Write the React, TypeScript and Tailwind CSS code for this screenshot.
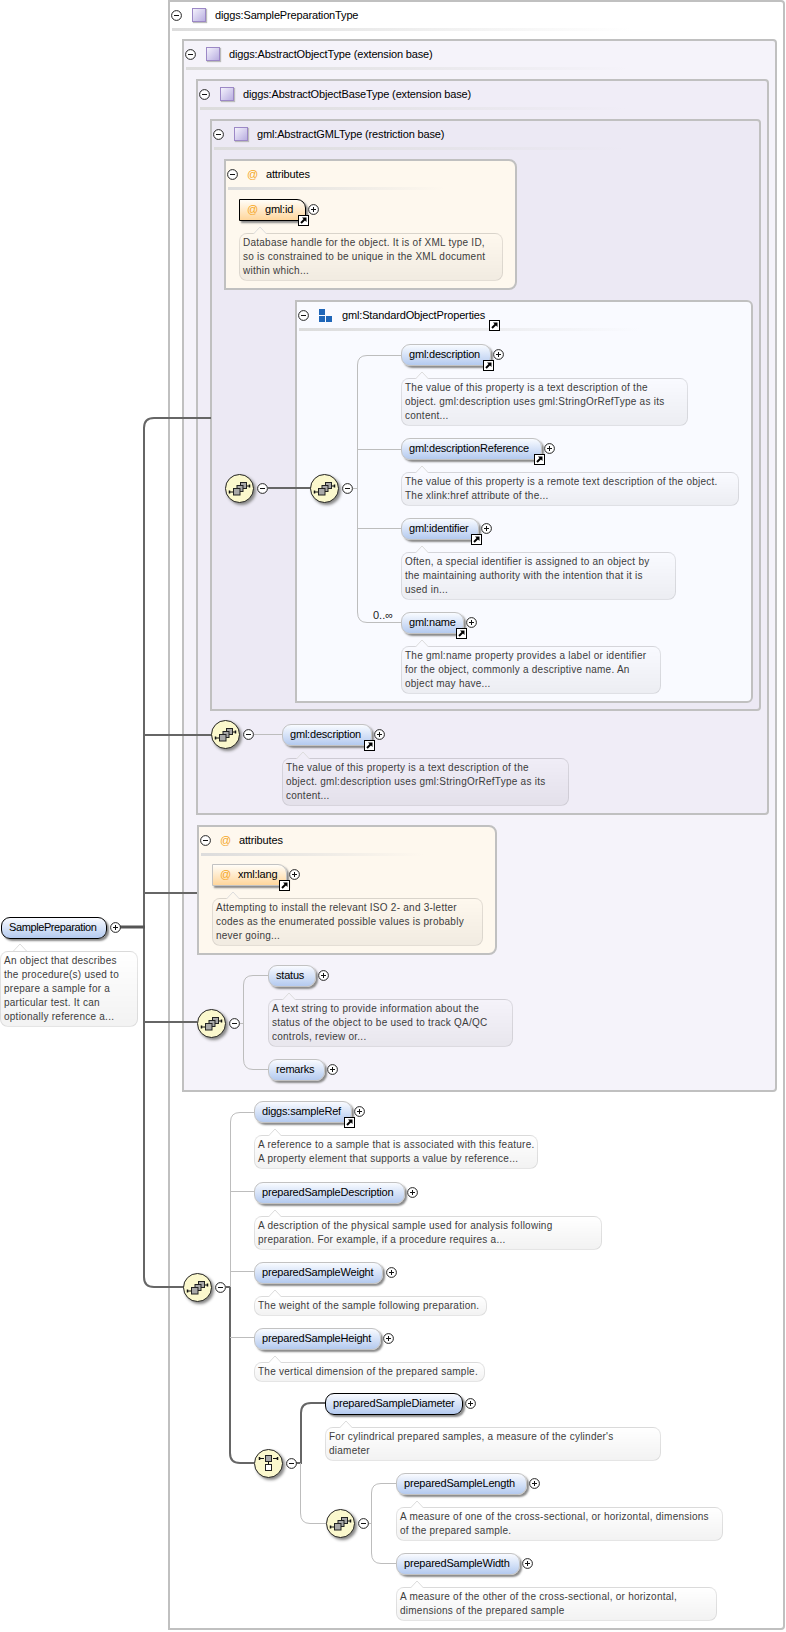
import type { ReactNode } from 'react';

function Minus() {
  return (
    <svg width="11" height="11" viewBox="0 0 11 11" className="shrink-0">
      <circle cx="5.5" cy="5.5" r="4.9" fill="#fff" stroke="#222" />
      <path d="M3 5.5h5" stroke="#111" />
    </svg>
  );
}

function Plus() {
  return (
    <svg width="11" height="11" viewBox="0 0 11 11" className="shrink-0">
      <circle cx="5.5" cy="5.5" r="4.9" fill="#fff" stroke="#222" />
      <path d="M3 5.5h5M5.5 3v5" stroke="#111" />
    </svg>
  );
}

function RefArrow({ className }: { className: string }) {
  return (
    <svg width="11" height="11" viewBox="0 0 11 11" className={className}>
      <rect x="0.5" y="0.5" width="10" height="10" fill="#fff" stroke="#000" />
      <path d="M3 8l4-4" stroke="#000" strokeWidth="2" />
      <path d="M4 2.5h4.5V7z" fill="#000" />
    </svg>
  );
}

function TypeIcon() {
  return (
    <div className="h-[14px] w-[14px] shrink-0 border-[1.5px] border-[#9c88c6] bg-linear-to-br from-[#f4f2fc] to-[#b9aee0] shadow-[1px_1px_1px_#bbb]"></div>
  );
}

function GroupIcon() {
  return (
    <svg width="13" height="13" viewBox="0 0 13 13" className="shrink-0">
      <path d="M0 0h6v6H0zM0 7h6v6H0zM7 7h6v6H7z" fill="#1f66b8" />
    </svg>
  );
}

function Symbol({ className, choice }: { className: string; choice?: boolean }) {
  return (
    <div className={`absolute flex items-center ${className}`}>
      <div className="h-[29px] w-[29px] shrink-0 rounded-full border border-[#222] bg-[#fbf8cd] shadow-[2px_2px_3px_#888]">
        {choice ? (
          <svg width="27" height="27" viewBox="0 0 27 27">
            <path d="M5 8.5h4M18 8.5h4M13.5 12v2" stroke="#111" />
            <path d="M4.5 7v3M22.5 7v3" stroke="#111" strokeWidth="1.5" />
            <rect x="10.5" y="5.5" width="6" height="6" fill="#a8a8a8" stroke="#222" />
            <rect x="10.5" y="14.5" width="6" height="6" fill="#fff" stroke="#222" />
          </svg>
        ) : (
          <svg width="27" height="27" viewBox="0 0 27 27">
            <path d="M3.5 17h4M20 11h3.5" stroke="#111" />
            <path d="M3.5 15.5v3M23.5 9.5v3" stroke="#111" strokeWidth="1.5" />
            <rect x="14.5" y="7.5" width="6" height="6" fill="#a8a8a8" stroke="#222" />
            <rect x="11" y="10.5" width="6" height="6" fill="#a8a8a8" stroke="#222" />
            <rect x="7.5" y="13.5" width="6.5" height="6.5" fill="#a8a8a8" stroke="#222" />
          </svg>
        )}
      </div>
      <div className="ml-[3px]">
        <Minus />
      </div>
    </div>
  );
}

function Desc({
  lines,
  w,
  tri = 'fill-white',
}: {
  lines: string[];
  w: string;
  tri?: string;
}) {
  return (
    <div
      className={`relative mt-[12px] rounded-[8px] border border-black/10 bg-linear-to-b from-transparent to-black/5 py-[2px] pl-[3px] text-[10px] leading-[14px] tracking-[0.25px] whitespace-nowrap text-[#3c3c3c] ${w}`}
    >
      <svg
        width="16"
        height="8"
        viewBox="0 0 16 8"
        className={`absolute top-[-8px] left-[12px] ${tri}`}
      >
        <path d="M1 8.5L8 1l7 7.5" stroke="#dcdcdc" />
      </svg>
      {lines.map((line) => (
        <div key={line}>{line}</div>
      ))}
    </div>
  );
}

interface LeafProps {
  name: string;
  pos: string;
  pillW: string;
  descW?: string;
  lines?: string[];
  tri?: string;
  hasRef?: boolean;
  selected?: boolean;
  plusGap?: string;
  track?: string;
}

function Leaf({
  name,
  pos,
  pillW,
  descW,
  lines,
  tri,
  hasRef,
  selected,
  plusGap = 'ml-[2px]',
  track = 'tracking-[-0.2px]',
}: LeafProps) {
  return (
    <div className={`absolute ${pos}`}>
      <div className="flex items-center">
        <div
          className={`relative flex h-[22px] items-center rounded-[9px] border bg-linear-to-b from-[#f9fbff] to-[#b4caef] pb-[2px] pl-[7px] text-[11px] whitespace-nowrap text-black shadow-[2px_2px_2px_#8a8a8a] ${track} ${pillW} ${selected ? 'border-black' : 'border-[#c2c2c2]'}`}
        >
          {name}
          {hasRef && <RefArrow className="absolute top-[15px] right-[-4px]" />}
        </div>
        <div className={`mb-[2px] ${plusGap}`}>
          <Plus />
        </div>
      </div>
      {lines && descW && <Desc lines={lines} w={descW} tri={tri} />}
    </div>
  );
}

function AttrPill({ name, pillW, selected }: { name: string; pillW: string; selected?: boolean }) {
  return (
    <div className="flex items-center">
      <div
        className={`relative flex h-[22px] items-center rounded-tr-[9px] border bg-linear-to-b from-[#fffdf8] to-[#ffd69b] pb-[2px] pl-[7px] text-[11px] tracking-[-0.2px] text-black shadow-[2px_2px_2px_#8a8a8a] ${pillW} ${selected ? 'border-black' : 'border-[#c2c2c2]'}`}
      >
        <span className="mr-[7px] text-[#f5a623]">@</span>
        {name}
        <RefArrow className="absolute top-[15px] right-[-4px]" />
      </div>
      <div className="mb-[2px] ml-[2px]">
        <Plus />
      </div>
    </div>
  );
}

function Panel({
  className,
  header,
  children,
}: {
  className: string;
  header: ReactNode;
  children?: ReactNode;
}) {
  return (
    <div className={`border-2 border-[#c0c0c0] ${className}`}>
      <div className="flex h-[26px] items-center pl-[1px] text-[11px] tracking-[-0.15px] text-black">
        {header}
      </div>
      <div className="ml-[2px] h-[3px] w-3/4 bg-linear-to-r from-[#dcdcdc] to-transparent"></div>
      {children}
    </div>
  );
}

function TypeHeader({ label }: { label: string }) {
  return (
    <>
      <Minus />
      <div className="ml-[10px]">
        <TypeIcon />
      </div>
      <span className="ml-[9px]">{label}</span>
    </>
  );
}

function AttrHeader() {
  return (
    <>
      <Minus />
      <span className="ml-[9px] w-[10px] text-[#f5a623]">@</span>
      <span className="ml-[9px]">attributes</span>
    </>
  );
}

function Connectors() {
  return (
    <svg width="786" height="1632" viewBox="0 0 786 1632" fill="none" className="pointer-events-none absolute inset-0">
      <g stroke="#666" strokeWidth="2">
        <path d="M211 418H154Q144 418 144 428V1277Q144 1287 154 1287H184" />
        <path d="M144 735H212M144 893H197M144 1022H197M268 488H311" />
        <path d="M226 1287H230V1453Q230 1463 240 1463H254" />
        <path d="M296 1463H301V1413Q301 1403 311 1403H326" />
      </g>
      <path d="M120 927H145" stroke="#555" strokeWidth="3" />
      <g stroke="#bdbdbd">
        <path d="M401 355.5H367Q357.5 355.5 357.5 365V612Q357.5 622.5 367 622.5H401" />
        <path d="M353 488.5H357M357 449.5H401M357 528.5H401" />
        <path d="M254 734.5H282" />
        <path d="M240 1023.5H243M268 975.5H253Q243.5 975.5 243.5 985V1059Q243.5 1069.5 253 1069.5H268" />
        <path d="M254 1112.5H240Q230.5 1112.5 230.5 1122V1287M230 1191.5H254M230 1271.5H254M230 1337.5H254" />
        <path d="M300.5 1463V1513Q300.5 1523.5 310 1523.5H326" />
        <path d="M367 1523.5H371M396 1483.5H381Q371.5 1483.5 371.5 1493V1553Q371.5 1563.5 381 1563.5H396" />
      </g>
    </svg>
  );
}

export default function App() {
  return (
    <div className="relative h-[1632px] w-[786px] overflow-hidden bg-white font-['Liberation_Sans',sans-serif]">
      <Panel
        className="ml-[168px] h-[1630px] w-[617px] rounded-r-[4px] bg-white"
        header={<TypeHeader label="diggs:SamplePreparationType" />}
      >
        <Panel
          className="mt-[8px] mr-[6px] ml-[12px] h-[1053px] rounded-r-[4px] bg-[#f5f3fa]"
          header={<TypeHeader label="diggs:AbstractObjectType (extension base)" />}
        >
          <Panel
            className="mt-[9px] mr-[6px] ml-[12px] h-[736px] rounded-r-[4px] bg-[#f0edf7]"
            header={<TypeHeader label="diggs:AbstractObjectBaseType (extension base)" />}
          >
            <Panel
              className="mt-[9px] mr-[6px] ml-[12px] h-[592px] rounded-r-[4px] bg-[#ece9f4]"
              header={<TypeHeader label="gml:AbstractGMLType (restriction base)" />}
            >
              <Panel
                className="mt-[9px] ml-[12px] h-[131px] w-[293px] rounded-r-[8px] bg-[#fef8ee]"
                header={<AttrHeader />}
              >
                <div className="mt-[9px] ml-[13px]">
                  <AttrPill name="gml:id" pillW="w-[67px]" selected />
                  <Desc
                    w="w-[264px]"
                    tri="fill-[#fef8ee]"
                    lines={[
                      'Database handle for the object. It is of XML type ID,',
                      'so is constrained to be unique in the XML document',
                      'within which...',
                    ]}
                  />
                </div>
              </Panel>
              <Panel
                className="mt-[10px] ml-[83px] h-[403px] w-[458px] rounded-r-[6px] bg-[#f9faff]"
                header={
                  <>
                    <Minus />
                    <div className="ml-[10px]">
                      <GroupIcon />
                    </div>
                    <span className="relative ml-[10px]">
                      gml:StandardObjectProperties
                      <RefArrow className="absolute top-[13px] right-[-15px]" />
                    </span>
                  </>
                }
              />
            </Panel>
          </Panel>
          <Panel className="mt-[10px] ml-[13px] h-[130px] w-[300px] rounded-r-[8px] bg-[#fef8ee]" header={<AttrHeader />}>
            <div className="mt-[8px] ml-[13px]">
              <AttrPill name="xml:lang" pillW="w-[75px]" />
              <Desc
                w="w-[271px]"
                tri="fill-[#fef8ee]"
                lines={[
                  'Attempting to install the relevant ISO 2- and 3-letter',
                  'codes as the enumerated possible values is probably',
                  'never going...',
                ]}
              />
            </div>
          </Panel>
        </Panel>
      </Panel>

      <Connectors />

      <Leaf
        pos="left-[1px] top-[917px]"
        name="SamplePreparation"
        pillW="w-[106px]"
        selected
        plusGap="ml-[3px]"
        track="tracking-[-0.4px]"
      />
      <div className="absolute top-[951px] left-0">
        <svg width="16" height="8" viewBox="0 0 16 8" className="absolute top-[-8px] left-[12px] fill-white">
          <path d="M1 8.5L8 1l7 7.5" stroke="#dcdcdc" />
        </svg>
        <div className="w-[138px] rounded-[8px] border border-black/10 bg-linear-to-b from-transparent to-black/5 py-[2px] pl-[3px] text-[10px] leading-[14px] tracking-[0.25px] whitespace-nowrap text-[#3c3c3c]">
          <div>An object that describes</div>
          <div>the procedure(s) used to</div>
          <div>prepare a sample for a</div>
          <div>particular test. It can</div>
          <div>optionally reference a...</div>
        </div>
      </div>

      <Symbol className="left-[225px] top-[474px]" />
      <Symbol className="left-[310px] top-[474px]" />

      <Leaf
        pos="left-[401px] top-[344px]"
        name="gml:description"
        pillW="w-[90px]"
        hasRef
        descW="w-[287px]"
        tri="fill-[#f9faff]"
        lines={[
          'The value of this property is a text description of the',
          'object. gml:description uses gml:StringOrRefType as its',
          'content...',
        ]}
      />
      <Leaf
        pos="left-[401px] top-[438px]"
        name="gml:descriptionReference"
        pillW="w-[141px]"
        hasRef
        descW="w-[338px]"
        tri="fill-[#f9faff]"
        lines={[
          'The value of this property is a remote text description of the object.',
          'The xlink:href attribute of the...',
        ]}
      />
      <Leaf
        pos="left-[401px] top-[518px]"
        name="gml:identifier"
        pillW="w-[78px]"
        hasRef
        descW="w-[275px]"
        tri="fill-[#f9faff]"
        lines={[
          'Often, a special identifier is assigned to an object by',
          'the maintaining authority with the intention that it is',
          'used in...',
        ]}
      />
      <span className="absolute top-[608px] left-[373px] text-[11px] leading-[14px] text-[#222]">0..∞</span>
      <Leaf
        pos="left-[401px] top-[612px]"
        name="gml:name"
        pillW="w-[63px]"
        hasRef
        descW="w-[260px]"
        tri="fill-[#f9faff]"
        lines={[
          'The gml:name property provides a label or identifier',
          'for the object, commonly a descriptive name. An',
          'object may have...',
        ]}
      />

      <Symbol className="left-[211px] top-[720px]" />
      <Leaf
        pos="left-[282px] top-[724px]"
        name="gml:description"
        pillW="w-[90px]"
        hasRef
        descW="w-[287px]"
        tri="fill-[#f0edf7]"
        lines={[
          'The value of this property is a text description of the',
          'object. gml:description uses gml:StringOrRefType as its',
          'content...',
        ]}
      />

      <Symbol className="left-[197px] top-[1009px]" />
      <Leaf
        pos="left-[268px] top-[965px]"
        name="status"
        pillW="w-[48px]"
        descW="w-[245px]"
        tri="fill-[#f5f3fa]"
        lines={[
          'A text string to provide information about the',
          'status of the object to be used to track QA/QC',
          'controls, review or...',
        ]}
      />
      <Leaf pos="left-[268px] top-[1059px]" name="remarks" pillW="w-[57px]" />

      <Symbol className="left-[183px] top-[1273px]" />
      <Leaf
        pos="left-[254px] top-[1101px]"
        name="diggs:sampleRef"
        pillW="w-[98px]"
        hasRef
        descW="w-[284px]"
        lines={[
          'A reference to a sample that is associated with this feature.',
          'A property element that supports a value by reference...',
        ]}
      />
      <Leaf
        pos="left-[254px] top-[1182px]"
        name="preparedSampleDescription"
        pillW="w-[151px]"
        descW="w-[348px]"
        lines={[
          'A description of the physical sample used for analysis following',
          'preparation. For example, if a procedure requires a...',
        ]}
      />
      <Leaf
        pos="left-[254px] top-[1262px]"
        name="preparedSampleWeight"
        pillW="w-[129px]"
        plusGap="ml-[3px]"
        descW="w-[233px]"
        lines={['The weight of the sample following preparation.']}
      />
      <Leaf
        pos="left-[254px] top-[1328px]"
        name="preparedSampleHeight"
        pillW="w-[127px]"
        descW="w-[231px]"
        lines={['The vertical dimension of the prepared sample.']}
      />

      <Symbol choice className="left-[254px] top-[1449px]" />
      <Leaf
        pos="left-[325px] top-[1393px]"
        name="preparedSampleDiameter"
        pillW="w-[138px]"
        selected
        descW="w-[336px]"
        lines={[
          "For cylindrical prepared samples, a measure of the cylinder's",
          'diameter',
        ]}
      />
      <Symbol className="left-[326px] top-[1509px]" />
      <Leaf
        pos="left-[396px] top-[1473px]"
        name="preparedSampleLength"
        pillW="w-[131px]"
        descW="w-[327px]"
        lines={[
          'A measure of one of the cross-sectional, or horizontal, dimensions',
          'of the prepared sample.',
        ]}
      />
      <Leaf
        pos="left-[396px] top-[1553px]"
        name="preparedSampleWidth"
        pillW="w-[124px]"
        descW="w-[321px]"
        lines={[
          'A measure of the other of the cross-sectional, or horizontal,',
          'dimensions of the prepared sample',
        ]}
      />
    </div>
  );
}
